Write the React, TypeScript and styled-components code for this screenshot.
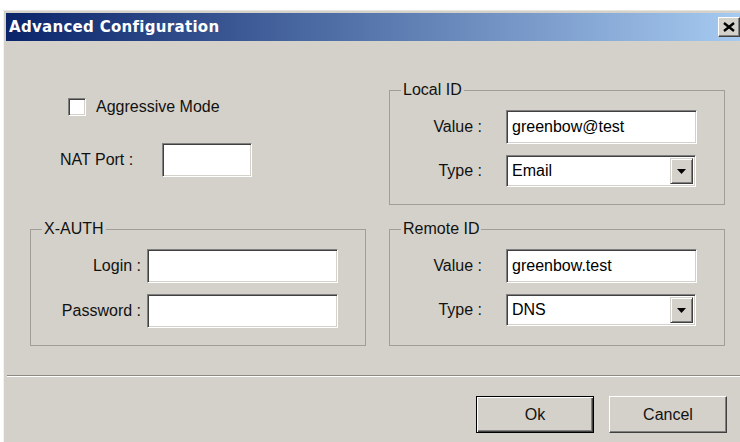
import React from "react";
import styled, { createGlobalStyle } from "styled-components";

const Global = createGlobalStyle`
  html, body {
    margin: 0;
    padding: 0;
    background: #ffffff;
    overflow: hidden;
  }
  body {
    font-family: "Liberation Sans", Arial, sans-serif;
  }
  *, *::before, *::after {
    box-sizing: border-box;
  }
`;

const Window = styled.div`
  margin: 10px 0 0 3px;
  width: calc(100% - 3px);
  height: 432px;
  background: #d4d1ca;
  border-top: 1px solid #e6e4df;
  border-left: 1px solid #f4f3f0;
  padding: 2px 0 0 2px;
  overflow: hidden;
`;

const TitleBar = styled.div`
  height: 28px;
  display: flex;
  align-items: center;
  justify-content: space-between;
  padding: 0 0 0 3px;
  background: linear-gradient(90deg, #0a246a 0%, #a6caf0 100%);
`;

const Title = styled.span`
  font-family: "DejaVu Sans", Verdana, sans-serif;
  font-weight: bold;
  font-size: 15px;
  color: #ffffff;
  letter-spacing: 0.3px;
`;

const CloseButton = styled.button`
  width: 22px;
  height: 20px;
  padding: 0;
  display: flex;
  align-items: center;
  justify-content: center;
  background: #d4d1ca;
  border: 1px solid;
  border-color: #ffffff #404040 #404040 #ffffff;
  box-shadow: inset -1px -1px 0 #808080;
`;

const Body = styled.div`
  display: grid;
  grid-template-columns: 336px 336px;
  column-gap: 23px;
  row-gap: 15px;
  padding: 40px 0 0 24px;
`;

const Options = styled.div`
  display: flex;
  flex-direction: column;
  padding-top: 17px;
`;

const CheckRow = styled.label`
  display: flex;
  align-items: center;
  gap: 10px;
  margin-left: 38px;
  height: 18px;
  font-size: 16px;
  color: #111;
`;

const CheckBox = styled.span`
  width: 18px;
  height: 18px;
  background: #ffffff;
  border: 1px solid;
  border-color: #808080 #ffffff #ffffff #808080;
  box-shadow: inset 1px 1px 0 #404040, inset -1px -1px 0 #d4d1ca;
`;

const PortRow = styled.div`
  display: flex;
  align-items: center;
  margin: 27px 0 0 30px;
`;

const Label = styled.span<{ $width: number; $align?: "left" | "right"; $gap?: number }>`
  width: ${(p) => p.$width}px;
  margin-right: ${(p) => p.$gap ?? 0}px;
  text-align: ${(p) => p.$align ?? "left"};
  font-size: 16px;
  color: #111;
  white-space: nowrap;
  flex-shrink: 0;
`;

const Sunken = styled.div<{ $width: number; $height: number }>`
  width: ${(p) => p.$width}px;
  height: ${(p) => p.$height}px;
  display: flex;
  align-items: center;
  background: #ffffff;
  border: 1px solid;
  border-color: #808080 #ffffff #ffffff #808080;
  box-shadow: inset 1px 1px 0 #404040, inset -1px -1px 0 #d4d1ca;
  padding: 2px 2px 2px 5px;
  font-size: 16px;
  color: #000;
  white-space: nowrap;
`;

const SelectText = styled.span`
  flex: 1;
`;

const DropButton = styled.span`
  width: 23px;
  height: 100%;
  display: flex;
  align-items: center;
  justify-content: center;
  background: #d4d1ca;
  border: 1px solid;
  border-color: #d4d1ca #404040 #404040 #d4d1ca;
  box-shadow: inset 1px 1px 0 #ffffff, inset -1px -1px 0 #808080;
`;

const Group = styled.fieldset`
  margin: 0;
  padding: 11px 0 17px 0;
  min-width: 0;
  border: 1px solid #a19e98;
  display: flex;
  flex-direction: column;
  gap: 11px;
`;

const Legend = styled.legend`
  margin-left: 11px;
  padding: 0 2px;
  font-size: 16px;
  line-height: 18px;
  color: #111;
`;

const Row = styled.div`
  display: flex;
  align-items: center;
`;

const Separator = styled.div`
  margin: 29px 0 0 1px;
  border-top: 1px solid #8c8984;
  border-bottom: 1px solid #ffffff;
`;

const Footer = styled.div`
  display: flex;
  justify-content: flex-end;
  gap: 15px;
  padding: 19px 13px 0 0;
`;

const Button = styled.button<{ $default?: boolean }>`
  width: 118px;
  height: 37px;
  padding: 0;
  background: #d4d1ca;
  font-family: "Liberation Sans", Arial, sans-serif;
  font-size: 16px;
  color: #111;
  border: 1px solid;
  border-color: ${(p) => (p.$default ? "#000000" : "#ffffff #404040 #404040 #ffffff")};
  box-shadow: ${(p) =>
    p.$default
      ? "inset 1px 1px 0 #ffffff, inset -1px -1px 0 #404040, inset -2px -2px 0 #808080"
      : "inset -1px -1px 0 #808080"};
`;

const CloseIcon = () => (
  <svg width="12" height="10" viewBox="0 0 12 10">
    <path d="M1 1 L11 9 M11 1 L1 9" stroke="#000" strokeWidth="2.4" fill="none" />
  </svg>
);

const ArrowIcon = () => (
  <svg width="9" height="5" viewBox="0 0 9 5">
    <path d="M0 0 H9 L4.5 5 Z" fill="#000" />
  </svg>
);

type Field = { label: string; value?: string; select?: boolean };

const IdGroup = ({ title, gap, fields }: { title: string; gap: number; fields: Field[] }) => (
  <Group>
    <Legend>{title}</Legend>
    {fields.map((f) => (
      <Row key={f.label}>
        <Label $width={116 - gap} $gap={gap} $align="right">
          {f.label}
        </Label>
        {f.select ? (
          <Sunken $width={190} $height={32}>
            <SelectText>{f.value}</SelectText>
            <DropButton>
              <ArrowIcon />
            </DropButton>
          </Sunken>
        ) : (
          <Sunken $width={191} $height={34}>
            {f.value}
          </Sunken>
        )}
      </Row>
    ))}
  </Group>
);

export default function App() {
  return (
    <>
      <Global />
      <Window>
        <TitleBar>
          <Title>Advanced Configuration</Title>
          <CloseButton aria-label="Close">
            <CloseIcon />
          </CloseButton>
        </TitleBar>
        <Body>
          <Options>
            <CheckRow>
              <CheckBox />
              Aggressive Mode
            </CheckRow>
            <PortRow>
              <Label $width={102}>NAT Port :</Label>
              <Sunken $width={90} $height={34} />
            </PortRow>
          </Options>
          <IdGroup
            title="Local ID"
            gap={24}
            fields={[
              { label: "Value :", value: "greenbow@test" },
              { label: "Type :", value: "Email", select: true },
            ]}
          />
          <IdGroup
            title="X-AUTH"
            gap={6}
            fields={[{ label: "Login :" }, { label: "Password :" }]}
          />
          <IdGroup
            title="Remote ID"
            gap={24}
            fields={[
              { label: "Value :", value: "greenbow.test" },
              { label: "Type :", value: "DNS", select: true },
            ]}
          />
        </Body>
        <Separator />
        <Footer>
          <Button $default>Ok</Button>
          <Button>Cancel</Button>
        </Footer>
      </Window>
    </>
  );
}
